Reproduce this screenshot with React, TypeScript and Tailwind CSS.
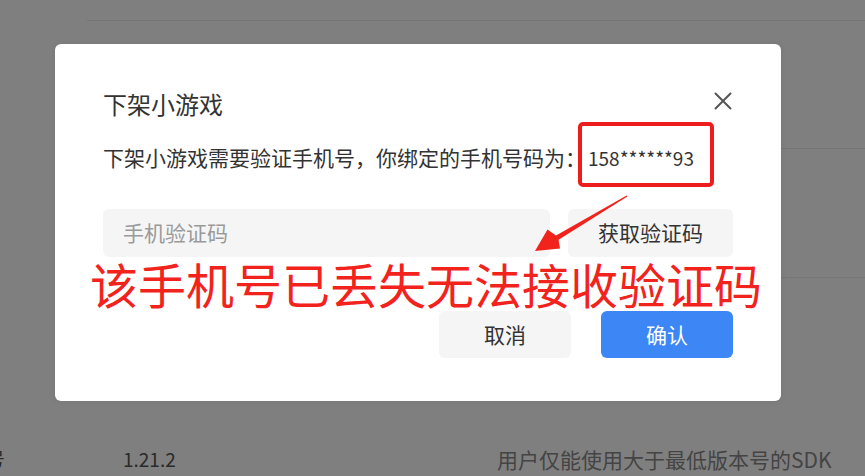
import React from "react";

export default function App() {
  return (
    <div className="relative w-[865px] h-[476px] overflow-hidden bg-[#7f7f7f] font-['Noto_Sans_CJK_SC','Noto_Sans',sans-serif]">
      {/* background page (dimmed) */}
      <div className="pt-[20px]">
        <div className="ml-[87px] h-[128px] border-t border-[#767676]" />
        <div className="ml-[87px] h-[129px] border-t border-[#767676]" />
        <div className="ml-[87px] h-[167px] border-t border-[#767676]" />
        <div className="flex h-[30px] items-center text-[19px] leading-[30px]">
          <div className="flex w-[5px] justify-end overflow-hidden text-[#2a2a2a]">
            <span className="shrink-0">号</span>
          </div>
          <div className="ml-[118px] w-[374px] text-[#2a2a2a]">1.21.2</div>
          <div className="whitespace-nowrap text-[21px] text-[#444444]">用户仅能使用大于最低版本号的SDK</div>
        </div>
      </div>

      {/* modal dialog */}
      <div className="absolute left-[55px] top-[44px] h-[357px] w-[726px] rounded-[6px] bg-white px-[48px] pt-[44px] shadow-[0_0_6px_rgba(0,0,0,0.08)]">
        <div className="flex h-[32px] items-start justify-between">
          <div className="text-[24px] leading-[32px] text-[#333333]">下架小游戏</div>
          <svg className="mr-[1px] mt-[4px] h-[18px] w-[18px]" viewBox="0 0 18 18" fill="none">
            <path d="M1.5 1.5 L16.5 16.5 M16.5 1.5 L1.5 16.5" stroke="#555555" strokeWidth="2" strokeLinecap="round" />
          </svg>
        </div>
        <div className="mt-[22px] whitespace-nowrap text-[21px] leading-[30px] text-[#333333]">
          下架小游戏需要验证手机号，你绑定的手机号码为：<span className="ml-[2px] text-[19px]">158******93</span>
        </div>
        <div className="mt-[36px] flex h-[48px] gap-[18px]">
          <input
            readOnly
            placeholder="手机验证码"
            className="min-w-0 flex-1 rounded-[6px] bg-[#f5f5f5] pl-[20px] text-[21px] outline-none placeholder:text-[#9a9a9a]"
          />
          <button className="w-[165px] rounded-[6px] bg-[#f5f5f5] text-[21px] text-[#333333]">获取验证码</button>
        </div>
        <div className="mt-[54px] flex justify-end gap-[30px]">
          <button className="h-[47px] w-[132px] rounded-[6px] bg-[#f5f5f5] text-[21px] text-[#333333]">取消</button>
          <button className="h-[47px] w-[132px] rounded-[6px] bg-[#3c86f6] text-[21px] text-white">确认</button>
        </div>

        {/* annotations */}
        <div className="absolute left-[523px] top-[78px] h-[65px] w-[136px] rounded-[5px] border-[4px] border-[#ee1d1d]" />
        <div className="absolute left-[35px] top-[215px] whitespace-nowrap text-[48px] leading-[48px] text-[#f2231d]">
          该手机号已丢失无法接收验证码
        </div>
      </div>

      <svg className="pointer-events-none absolute left-0 top-0 h-[476px] w-[865px]" viewBox="0 0 865 476">
        <polygon
          points="626.6,195.4 556,235.5 547.5,229.5 535,251 560,248.5 558.6,239.7 627.4,196.6"
          fill="#f2231d"
        />
      </svg>
    </div>
  );
}
